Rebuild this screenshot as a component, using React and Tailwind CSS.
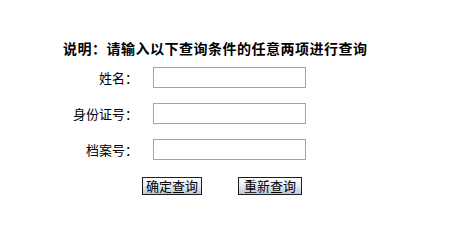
export default function App() {
  const rows = ['姓名：', '身份证号：', '档案号：']
  return (
    <div
      className="w-[467px] h-[231px] bg-white text-black"
      style={{ fontFamily: '"Noto Sans CJK SC", "Noto Sans", sans-serif' }}
    >
      <div className="pt-[41px] pl-[63px] text-[14px] leading-[15px] tracking-[0.5px] font-bold whitespace-nowrap">
        说明：请输入以下查询条件的任意两项进行查询
      </div>
      <div className="mt-[11px] grid grid-cols-[138px_153px] gap-x-[15px] gap-y-[15px] items-center">
        {rows.map((r) => (
          <div key={r} className="contents">
            <div className="text-right text-[13px] leading-[21px]">{r}</div>
            <input type="text" className="h-[21px] w-[153px] border border-[#a5a5a5] bg-white outline-none" />
          </div>
        ))}
      </div>
      <div className="mt-[17px] pl-[142px] flex gap-[36px]">
        <button className="h-[18px] w-[60px] border border-[#1e1e1e] bg-gradient-to-b from-white via-[#e6ecf5] to-[#b8c5da] text-[13px] leading-[16px]">
          确定查询
        </button>
        <button className="h-[18px] w-[64px] border border-[#1e1e1e] bg-gradient-to-b from-white via-[#e6ecf5] to-[#b8c5da] text-[13px] leading-[16px]">
          重新查询
        </button>
      </div>
    </div>
  )
}
